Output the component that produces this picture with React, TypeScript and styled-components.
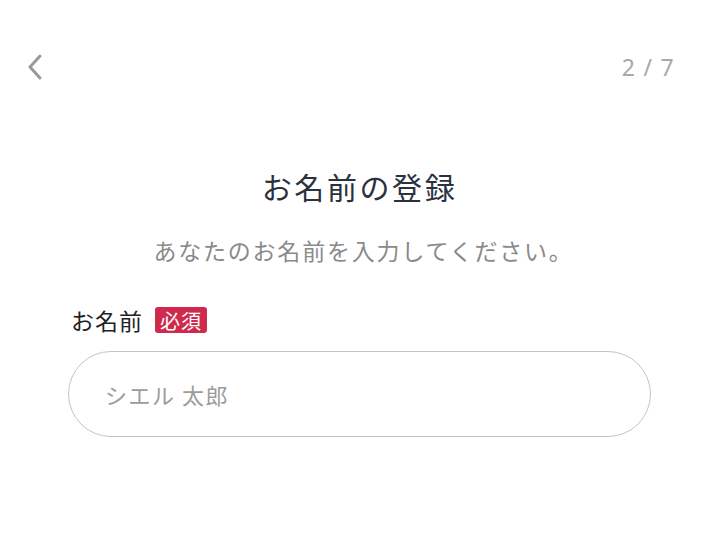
import styled, { createGlobalStyle } from 'styled-components';

const GlobalStyle = createGlobalStyle`
  html, body {
    margin: 0;
    padding: 0;
    background: #ffffff;
  }
  body {
    font-family: "Noto Sans CJK JP", "Noto Sans", sans-serif;
  }
`;

const Page = styled.div`
  width: 720px;
  height: 554px;
  background: #ffffff;
  box-sizing: border-box;
`;

const Header = styled.header`
  display: flex;
  justify-content: space-between;
  align-items: center;
  height: 44px;
  padding: 45px 45px 0 23px;
`;

const BackButton = styled.button`
  display: flex;
  align-items: center;
  justify-content: center;
  width: 24px;
  height: 32px;
  padding: 0;
  border: none;
  background: none;
  cursor: pointer;
`;

const Step = styled.span`
  font-family: "Noto Sans", sans-serif;
  font-size: 23px;
  letter-spacing: 1.3px;
  color: #a8a8a8;
`;

const Body = styled.main`
  display: flex;
  flex-direction: column;
  align-items: center;
  padding: 76px 69px 0 68px;
`;

const Title = styled.h1`
  margin: 0;
  font-size: 30px;
  font-weight: 400;
  letter-spacing: 2.6px;
  line-height: 42px;
  color: #2b323d;
`;

const Lead = styled.p`
  margin: 28px 0 0;
  padding-left: 8px;
  font-size: 23px;
  letter-spacing: 1.8px;
  line-height: 30px;
  color: #8a8a8a;
`;

const Field = styled.div`
  align-self: stretch;
  display: flex;
  flex-direction: column;
  gap: 14px;
  margin-top: 38px;
`;

const LabelRow = styled.label`
  display: flex;
  align-items: center;
  gap: 12px;
  padding-left: 3px;
  font-size: 23px;
  letter-spacing: 1px;
  color: #222222;
`;

const Required = styled.span`
  display: inline-flex;
  align-items: center;
  height: 26px;
  padding: 0 5px;
  border-radius: 3px;
  background: #cf2a4d;
  color: #ffffff;
  font-size: 20px;
  letter-spacing: 1px;
`;

const Input = styled.input`
  box-sizing: border-box;
  width: 583px;
  height: 86px;
  padding: 0 36px;
  border: 1.5px solid #c4c4c4;
  border-radius: 43px;
  font-family: "Noto Sans CJK JP", sans-serif;
  font-size: 22px;
  letter-spacing: 1.5px;
  color: #333333;
  outline: none;

  &::placeholder {
    color: #9c9c9c;
  }
`;

export default function App() {
  return (
    <Page>
      <GlobalStyle />
      <Header>
        <BackButton aria-label="戻る">
          <svg width="20" height="28" viewBox="0 0 20 28">
            <path
              d="M15 3 L5 14 L15 25"
              fill="none"
              stroke="#9a9a9a"
              strokeWidth="3"
              strokeLinecap="round"
              strokeLinejoin="round"
            />
          </svg>
        </BackButton>
        <Step>2 / 7</Step>
      </Header>
      <Body>
        <Title>お名前の登録</Title>
        <Lead>あなたのお名前を入力してください。</Lead>
        <Field>
          <LabelRow>
            お名前
            <Required>必須</Required>
          </LabelRow>
          <Input placeholder="シエル 太郎" />
        </Field>
      </Body>
    </Page>
  );
}
